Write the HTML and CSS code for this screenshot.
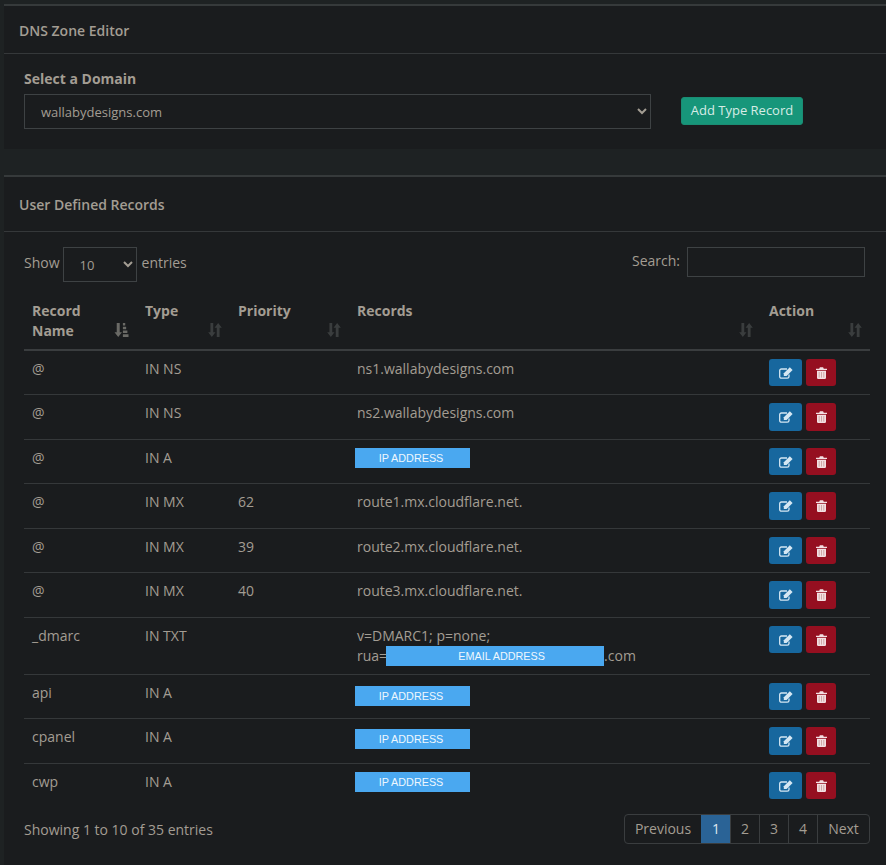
FILE: index.html
```html
<!DOCTYPE html>
<html lang="en">
<head>
<meta charset="utf-8">
<title>DNS Zone Editor</title>
<link rel="stylesheet" href="styles.css">
</head>
<body>
<svg class="defs" width="0" height="0" aria-hidden="true">
  <symbol id="sort" viewBox="0 0 15 15"><path d="M2.600 0h3v10h2.400L4.100 15 .2 10h2.400zM9.400 15V5H7l3.900-5 3.900 5h-2.400v10z" fill="currentColor"/></symbol>
  <symbol id="sort-asc" viewBox="0 0 15 15"><path d="M2.400 0h3.200v10h2.400L4 15 0 10h2.400z" fill="currentColor"/><path d="M9 0h2.500v2.800H9zM9 4h3.500v2.800H9zM9 8h4.800v2.800H9zM9 12h6v3H9z" fill="currentColor"/></symbol>
  <symbol id="edit" viewBox="0 0 14 12"><path d="M10 7.400v2.100A1.700 1.700 0 0 1 8.300 11.200H2.400A1.700 1.700 0 0 1 .7 9.500V3.700A1.700 1.700 0 0 1 2.400 2H8" fill="none" stroke="currentColor" stroke-width="1.300"/><path d="M4.800 6.200 10.800.3l2.800 2.600-6 6H4.800z" fill="currentColor"/></symbol>
  <symbol id="trash" viewBox="0 0 11 12"><path d="M0 1.800h3.200L3.900.3h3.200l.7 1.500H11V3H0zM1 3.800h9v6.900A1.300 1.300 0 0 1 8.700 12H2.300A1.300 1.300 0 0 1 1 10.700z" fill="currentColor"/><path d="M3.200 5v5.600M5.500 5v5.600M7.800 5v5.600" stroke="#c9a4a0" stroke-width=".9"/></symbol>
</svg>
<main class="page">
  <section class="card domain-card">
    <h2 class="card-title">DNS Zone Editor</h2>
    <div class="domain-body">
      <div class="domain-field">
        <label class="field-label" for="domain">Select a Domain</label>
        <select id="domain" class="control domain-select"><option>wallabydesigns.com</option></select>
      </div>
      <button class="btn-add" type="button">Add Type Record</button>
    </div>
  </section>

  <section class="card records-card">
    <h2 class="card-title">User Defined Records</h2>
    <div class="records-body">
      <div class="toolbar">
        <div class="length">Show <select class="control length-select"><option>10</option></select> entries</div>
        <div class="search">Search: <input class="control search-input" type="search"></div>
      </div>
      <table class="records">
        <colgroup><col class="c1"><col class="c2"><col class="c3"><col class="c4"><col class="c5"></colgroup>
        <thead>
          <tr>
            <th><div class="th-inner"><span class="th-narrow">Record Name</span><svg class="sort-icon active"><use href="#sort-asc"/></svg></div></th>
            <th><div class="th-inner"><span>Type</span><svg class="sort-icon"><use href="#sort"/></svg></div></th>
            <th><div class="th-inner"><span>Priority</span><svg class="sort-icon"><use href="#sort"/></svg></div></th>
            <th><div class="th-inner"><span>Records</span><svg class="sort-icon"><use href="#sort"/></svg></div></th>
            <th><div class="th-inner"><span>Action</span><svg class="sort-icon"><use href="#sort"/></svg></div></th>
          </tr>
        </thead>
        <tbody>
          <tr><td>@</td><td>IN NS</td><td></td><td>ns1.wallabydesigns.com</td><td><div class="actions"><button class="btn-edit" type="button"><svg class="ico-edit"><use href="#edit"/></svg></button><button class="btn-del" type="button"><svg class="ico-del"><use href="#trash"/></svg></button></div></td></tr>
          <tr><td>@</td><td>IN NS</td><td></td><td>ns2.wallabydesigns.com</td><td><div class="actions"><button class="btn-edit" type="button"><svg class="ico-edit"><use href="#edit"/></svg></button><button class="btn-del" type="button"><svg class="ico-del"><use href="#trash"/></svg></button></div></td></tr>
          <tr><td>@</td><td>IN A</td><td></td><td><span class="mask mask-ip">IP ADDRESS</span></td><td><div class="actions"><button class="btn-edit" type="button"><svg class="ico-edit"><use href="#edit"/></svg></button><button class="btn-del" type="button"><svg class="ico-del"><use href="#trash"/></svg></button></div></td></tr>
          <tr><td>@</td><td>IN MX</td><td>62</td><td>route1.mx.cloudflare.net.</td><td><div class="actions"><button class="btn-edit" type="button"><svg class="ico-edit"><use href="#edit"/></svg></button><button class="btn-del" type="button"><svg class="ico-del"><use href="#trash"/></svg></button></div></td></tr>
          <tr><td>@</td><td>IN MX</td><td>39</td><td>route2.mx.cloudflare.net.</td><td><div class="actions"><button class="btn-edit" type="button"><svg class="ico-edit"><use href="#edit"/></svg></button><button class="btn-del" type="button"><svg class="ico-del"><use href="#trash"/></svg></button></div></td></tr>
          <tr><td>@</td><td>IN MX</td><td>40</td><td>route3.mx.cloudflare.net.</td><td><div class="actions"><button class="btn-edit" type="button"><svg class="ico-edit"><use href="#edit"/></svg></button><button class="btn-del" type="button"><svg class="ico-del"><use href="#trash"/></svg></button></div></td></tr>
          <tr><td>_dmarc</td><td>IN TXT</td><td></td><td>v=DMARC1; p=none;<br>rua=<span class="mask mask-email">EMAIL ADDRESS</span>.com</td><td><div class="actions"><button class="btn-edit" type="button"><svg class="ico-edit"><use href="#edit"/></svg></button><button class="btn-del" type="button"><svg class="ico-del"><use href="#trash"/></svg></button></div></td></tr>
          <tr><td>api</td><td>IN A</td><td></td><td><span class="mask mask-ip mask-low3">IP ADDRESS</span></td><td><div class="actions"><button class="btn-edit" type="button"><svg class="ico-edit"><use href="#edit"/></svg></button><button class="btn-del" type="button"><svg class="ico-del"><use href="#trash"/></svg></button></div></td></tr>
          <tr><td>cpanel</td><td>IN A</td><td></td><td><span class="mask mask-ip mask-low1">IP ADDRESS</span></td><td><div class="actions"><button class="btn-edit" type="button"><svg class="ico-edit"><use href="#edit"/></svg></button><button class="btn-del" type="button"><svg class="ico-del"><use href="#trash"/></svg></button></div></td></tr>
          <tr><td>cwp</td><td>IN A</td><td></td><td><span class="mask mask-ip">IP ADDRESS</span></td><td><div class="actions"><button class="btn-edit" type="button"><svg class="ico-edit"><use href="#edit"/></svg></button><button class="btn-del" type="button"><svg class="ico-del"><use href="#trash"/></svg></button></div></td></tr>
        </tbody>
      </table>
      <div class="table-foot">
        <div class="info">Showing 1 to 10 of 35 entries</div>
        <nav class="pager">
          <a class="page-link pl-text">Previous</a>
          <a class="page-link current">1</a>
          <a class="page-link">2</a>
          <a class="page-link">3</a>
          <a class="page-link">4</a>
          <a class="page-link pl-text">Next</a>
        </nav>
      </div>
    </div>
  </section>
</main>
</body>
</html>
```
FILE: styles.css
```css
* { box-sizing: border-box; }
html, body { margin: 0; height: 100%; }
body {
  background: #1e2223;
  color: #a39d93;
  font-family: "Open Sans", sans-serif;
  font-size: 14px;
  line-height: 20px;
  overflow: hidden;
  color-scheme: dark;
}
.defs { position: absolute; }
.page { padding: 4px 0 0 4px; display: flex; flex-direction: column; gap: 26px; }
.card { background: #1a1c1e; border-top: 2px solid #363a3b; }
.card-title {
  margin: 0;
  padding: 15px 15px 12px;
  height: 48px;
  font-size: 14px;
  line-height: 20px;
  font-weight: 600;
  color: #a39d93;
  border-bottom: 1px solid #35383a;
}
.records-card .card-title { height: 55px; padding-top: 18px; }
.domain-body { display: flex; align-items: flex-end; padding: 15px 20px 20px; height: 95px; }
.domain-field { width: 627px; display: flex; flex-direction: column; gap: 5px; }
.field-label { font-weight: 700; line-height: 20px; color: #a39d93; }
.control {
  background: #1a1c1e;
  color: #a39d93;
  border: 1px solid #3e4244;
  border-radius: 0;
  font-family: "Open Sans", sans-serif;
  font-size: 13px;
}
.domain-select { height: 35px; width: 100%; padding-left: 12px; }
.btn-add {
  margin: 0 0 4px 30px;
  width: 122px;
  height: 28px;
  padding: 0 0 2px;
  background: #17967a;
  border: 1px solid #1a8d74;
  border-radius: 3px;
  color: #d8ece6;
  font-family: "Open Sans", sans-serif;
  font-size: 13px;
}
.records-body { padding: 15px 16px 40px 20px; }
.toolbar { display: flex; justify-content: space-between; height: 50px; padding-right: 5px; }
.length { display: flex; align-items: flex-start; gap: 3px; line-height: 31px; }
.length-select { width: 74px; height: 35px; padding-left: 12px; margin-right: 2px; }
.search { display: flex; align-items: flex-start; gap: 7px; line-height: 27px; }
.search-input { width: 178px; height: 30px; }
.records { width: 846px; table-layout: fixed; border-collapse: collapse; }
.c1 { width: 113px; }
.c2 { width: 93px; }
.c3 { width: 119px; }
.c4 { width: 412px; }
.c5 { width: 109px; }
th {
  padding: 4px 8px 7.75px;
  text-align: left;
  font-weight: 700;
  color: #a39d93;
  border-bottom: 2px solid #3a3d3f;
}
.th-inner { display: flex; justify-content: space-between; align-items: flex-end; height: 40px; }
.th-inner span { align-self: flex-start; }
.th-narrow { width: 60px; }
.sort-icon { width: 14px; height: 14px; color: #3a3d3e; flex: none; margin-bottom: 4px; }
.sort-icon.active { width: 15px; color: #6a6a66; }
td {
  padding: 8px;
  vertical-align: top;
  border-bottom: 1px solid #35383a;
  color: #a39d93;
}
tbody tr:last-child td { border-bottom: 0; }
.actions { display: flex; gap: 4px; }
.btn-edit, .btn-del {
  height: 27.5px;
  padding: 0;
  border: 0;
  border-radius: 3px;
  display: flex;
  align-items: center;
  justify-content: center;
}
.btn-edit { width: 33px; background: #17679e; color: #d5e7f3; }
.btn-del { width: 30px; background: #950f20; color: #f3dfe2; }
.ico-edit { width: 14px; height: 12px; }
.ico-del { width: 11px; height: 12px; }
.mask {
  display: inline-block;
  height: 20px;
  background: #4aa8f0;
  color: #eef7fe;
  font-family: "Liberation Sans", Arial, sans-serif;
  font-size: 10.8px;
  line-height: 20px;
  text-align: center;
  vertical-align: top;
}
.mask-ip { width: 115px; margin-left: -2px; padding-right: 3px; }
.mask-low3 { margin-top: 3px; }
.mask-low1 { margin-top: 2px; }
.mask-email { width: 218px; margin-left: -1px; padding-left: 13px; }
.table-foot { display: flex; justify-content: space-between; align-items: center; height: 30px; margin-top: 7px; }
.info { padding-top: 2px; }
.pager { display: flex; height: 30px; border: 1px solid #3a3d3f; border-radius: 4px; }
.page-link {
  width: 29px;
  line-height: 28px;
  text-align: center;
  border-left: 1px solid #3a3d3f;
  color: #a39d93;
}
.page-link:first-child { border-left: 0; width: 76px; }
.page-link:last-child { width: 52px; }
.page-link.current { background: #2a6396; color: #dfe7ee; border-left-color: #2a6396; }
```
